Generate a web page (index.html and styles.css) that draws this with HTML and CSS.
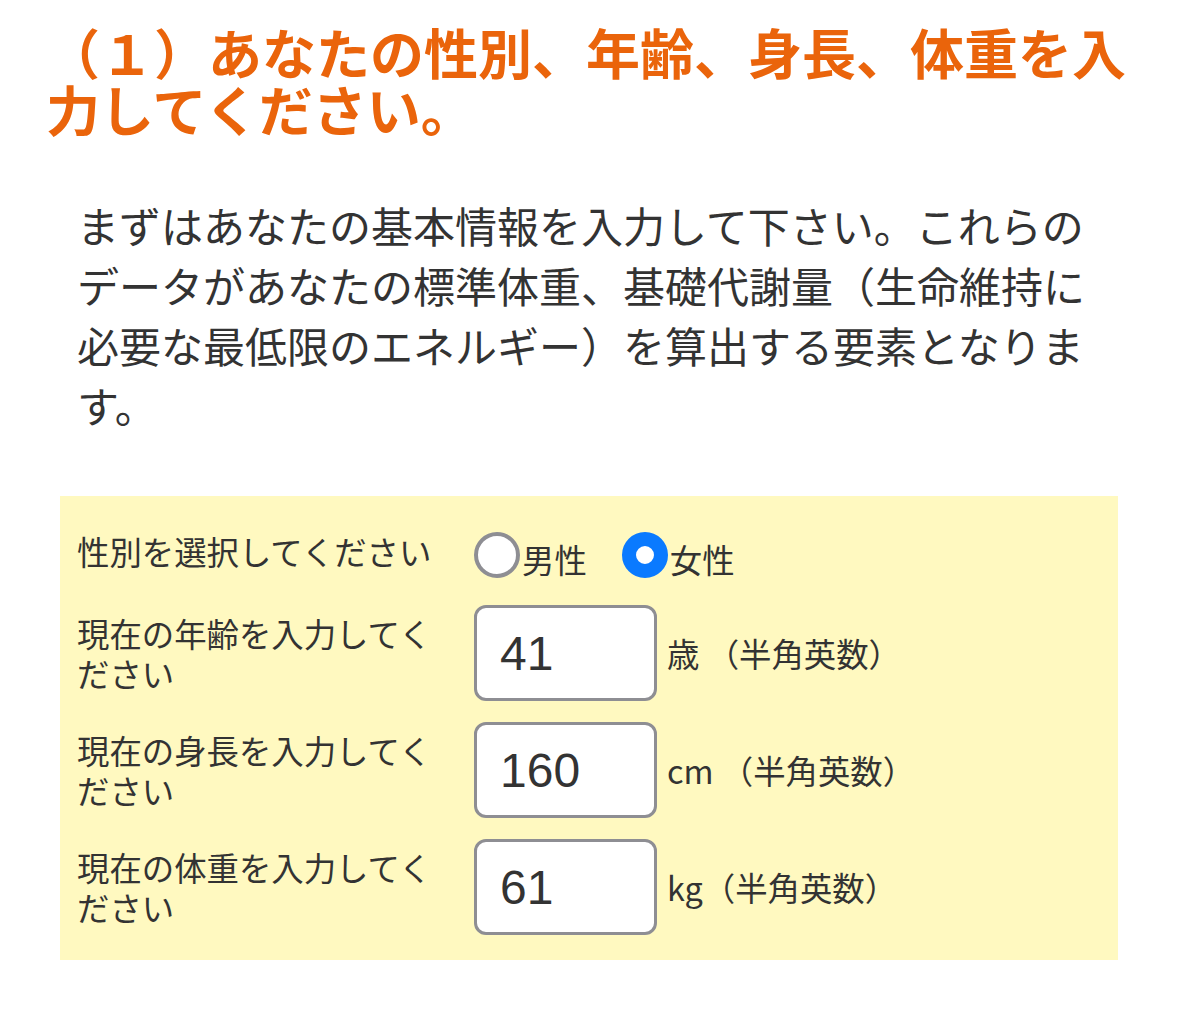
FILE: index.html
```html
<!DOCTYPE html>
<html lang="ja">
<head>
<meta charset="utf-8">
<title>基本情報の入力</title>
<link rel="stylesheet" href="styles.css">
</head>
<body>
<main class="page">
  <h1 class="title">（１）あなたの性別、年齢、身長、体重を入力してください。</h1>
  <p class="intro">まずはあなたの基本情報を入力して下さい。これらのデータがあなたの標準体重、基礎代謝量（生命維持に必要な最低限のエネルギー）を算出する要素となります。</p>
  <form class="form-box">
    <div class="label label-first">性別を選択してください</div>
    <div class="field radios">
      <label class="radio-opt"><input type="radio" name="sex" value="m"><span>男性</span></label>
      <label class="radio-opt"><input type="radio" name="sex" value="f" checked><span>女性</span></label>
    </div>

    <div class="label">現在の年齢を入力してください</div>
    <div class="field">
      <input class="num" type="text" value="41">
      <span class="unit">歳 （半角英数）</span>
    </div>

    <div class="label">現在の身長を入力してください</div>
    <div class="field">
      <input class="num" type="text" value="160">
      <span class="unit">cm （半角英数）</span>
    </div>

    <div class="label">現在の体重を入力してください</div>
    <div class="field">
      <input class="num" type="text" value="61">
      <span class="unit">kg（半角英数）</span>
    </div>
  </form>
</main>
</body>
</html>
```

FILE: styles.css
```css
html, body {
  margin: 0;
  padding: 0;
  background: #ffffff;
}

body {
  font-family: "Noto Sans CJK JP", "Noto Sans", sans-serif;
  color: #333333;
}

.page {
  padding-top: 23px;
}

.title {
  margin: 0 40px 0 46px;
  font-size: 54px;
  line-height: 57px;
  font-weight: 700;
  color: #ea640b;
}

.intro {
  margin: 58px 80px 0 77px;
  font-size: 42px;
  line-height: 60px;
  color: #333333;
}

.form-box {
  margin: 61px 61px 0 60px;
  background: #fff9c0;
  padding: 30px 17px 25px 17px;
  display: grid;
  grid-template-columns: 375px 1fr;
  column-gap: 22px;
  row-gap: 21px;
  align-items: center;
}

.label {
  font-size: 32.4px;
  line-height: 40px;
  color: #333333;
}

.label-first {
  align-self: start;
  padding-top: 5px;
}

.field {
  display: flex;
  align-items: center;
}

.radios {
  min-height: 58px;
  gap: 35px;
}

.radio-opt {
  display: flex;
  align-items: center;
  font-size: 32.4px;
  line-height: 40px;
  color: #333333;
}

.radio-opt span {
  padding-top: 8px;
}

.radio-opt input {
  -webkit-appearance: none;
  appearance: none;
  box-sizing: border-box;
  width: 46px;
  height: 46px;
  margin: 0 2px 0 0;
  border-radius: 50%;
  border: 4px solid #8e8e93;
  background: #ffffff;
}

.radio-opt input:checked {
  border: 14.5px solid #0a7aff;
}

.num {
  box-sizing: border-box;
  width: 183px;
  height: 96px;
  margin: 0;
  border: 3px solid #8e8e93;
  border-radius: 12px;
  background: #ffffff;
  padding: 0 0 0 23px;
  font-family: "Liberation Sans", Arial, sans-serif;
  font-size: 48px;
  color: #333333;
  outline: none;
}

.unit {
  margin-left: 10px;
  font-size: 32.4px;
  line-height: 40px;
  color: #333333;
  white-space: nowrap;
}
```
